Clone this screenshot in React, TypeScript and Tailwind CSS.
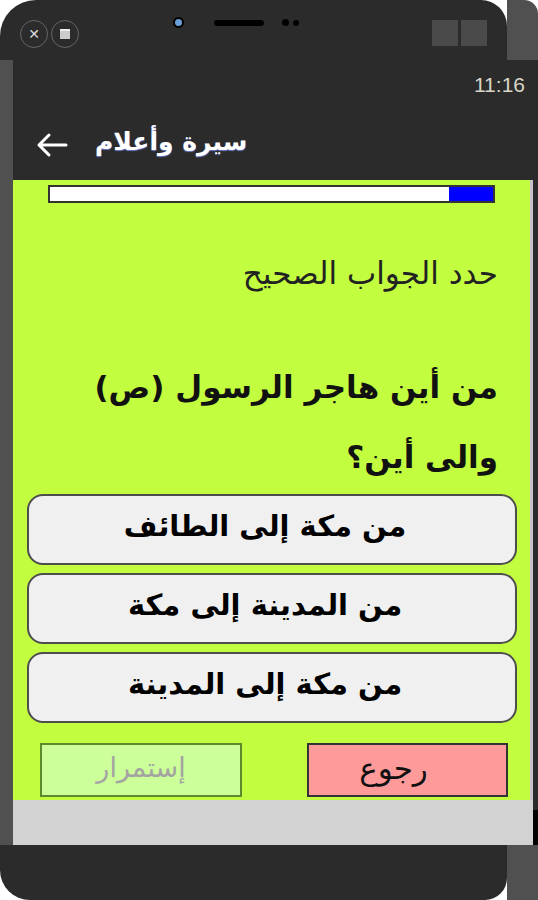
import { useState } from 'react';

const options = ['من مكة إلى الطائف', 'من المدينة إلى مكة', 'من مكة إلى المدينة'];

const arabic = { fontFamily: '"DejaVu Sans", "Liberation Sans", sans-serif' };

export default function App() {
  const [picked, setPicked] = useState<number | null>(null);

  return (
    <div className="w-[538px] h-[900px] bg-white flex flex-col overflow-hidden" style={arabic}>
      {/* top bezel */}
      <div className="h-[60px] flex">
        <div className="flex-1 bg-[#2b2b2b] rounded-tl-[36px] rounded-tr-[26px] flex items-start pt-[20px] pl-[20px]">
          <div className="flex gap-[3px]">
            <div className="w-[28px] h-[28px] rounded-full border border-[#666] flex items-center justify-center text-[#ddd] text-[14px] font-bold leading-none">
              ✕
            </div>
            <div className="w-[28px] h-[28px] rounded-full border border-[#666] flex items-center justify-center">
              <div className="w-[10px] h-[10px] bg-[#ccc] border-t-2 border-[#eee]" />
            </div>
          </div>
          <div className="flex items-center ml-[94px] mt-[-3px]">
            <div className="w-[11px] h-[11px] rounded-full bg-[#6a9fd8] border-2 border-black" />
            <div className="w-[50px] h-[6px] rounded-full bg-black ml-[30px]" />
            <div className="w-[7px] h-[7px] rounded-full bg-black ml-[18px]" />
            <div className="w-[6px] h-[6px] rounded-full bg-black ml-[4px]" />
          </div>
          <div className="flex gap-[3px] ml-auto mr-[20px]">
            <div className="w-[26px] h-[26px] bg-[#4a4a4a]" />
            <div className="w-[26px] h-[26px] bg-[#4a4a4a]" />
          </div>
        </div>
        <div className="w-[31px] bg-[#505050] rounded-tr-[14px]" />
      </div>

      {/* middle: side strips and the screen */}
      <div className="h-[785px] flex bg-[#2b2b2b]">
        <div className="w-[13px] bg-[#505050]" />
        <div className="flex-1 flex flex-col">
          <div className="h-[50px] bg-[#2b2b2b] flex items-center justify-end pr-[8px] text-[21px] text-[#d9d6c8]" style={{ fontFamily: '"Liberation Sans", sans-serif' }}>
            11:16
          </div>
          <div className="h-[70px] bg-[#2b2b2b] flex items-center pl-[22px] gap-[26px]">
            <svg width="34" height="26" viewBox="0 0 34 26" fill="none" stroke="white" strokeWidth="3" strokeLinecap="round" strokeLinejoin="round">
              <path d="M31 13H4M14 3L4 13l10 10" />
            </svg>
            <span className="text-white text-[25px] font-bold pb-[6px] [text-shadow:0_1px_1px_#6a7bd0]" dir="rtl">سيرة وأعلام</span>
          </div>

          <div className="flex-1 bg-[#c2fd3f] flex flex-col border-r-[3px] border-[#c9c2cc]">
            <div className="pt-[5px] px-[35px]">
              <div className="h-[18px] border-2 border-[#333] bg-white flex justify-end">
                <div className="w-[44px] bg-[#0000ff]" />
              </div>
            </div>

            <div dir="rtl" className="mt-[55px] pr-[32px] text-[31px] text-[#222] leading-[30px]">
              حدد الجواب الصحيح
            </div>

            <div dir="rtl" className="mt-[64px] pr-[32px] text-[31px] text-[#111] leading-[70px] font-bold">
              من أين هاجر الرسول (ص)
              <br />
              والى أين؟
            </div>

            <div className="mt-[2px] flex flex-col gap-[8px] pl-[14px] pr-[13px]">
              {options.map((opt, i) => (
                <button
                  key={i}
                  onClick={() => setPicked(i)}
                  dir="rtl"
                  className={`h-[71px] rounded-[16px] border-2 border-[#4d4d4d] text-[29px] font-bold text-black flex items-center justify-center pb-[6px] pr-[14px] ${picked === i ? 'bg-[#dddddd]' : 'bg-[#f0f0f0]'}`}
                >
                  {opt}
                </button>
              ))}
            </div>

            <div className="mt-[20px] flex justify-between pl-[27px] pr-[22px]">
              <button dir="rtl" className="w-[202px] h-[54px] bg-[#ccff99] border-2 border-[#5e8a2e] text-[27px] text-[#a3a3a3] flex items-center justify-center pb-[4px]">
                إستمرار
              </button>
              <button dir="rtl" className="w-[201px] h-[54px] bg-[#ff9a9a] border-2 border-[#333] text-[31px] text-[#111] flex items-center justify-center pb-[4px] pr-[28px]">
                رجوع
              </button>
            </div>
            <div className="flex-1" />
            <div className="h-[45px] bg-[#d2d2d2] mr-[-3px]" />
          </div>
        </div>
        <div className="w-[5px] bg-[#2b2b2b] flex flex-col justify-end">
          <div className="h-[35px] bg-black" />
        </div>
      </div>

      {/* bottom bezel */}
      <div className="flex-1 flex">
        <div className="flex-1 bg-[#2b2b2b] rounded-bl-[30px] rounded-br-[22px]" />
        <div className="w-[31px] bg-[#505050]" />
      </div>
    </div>
  );
}
